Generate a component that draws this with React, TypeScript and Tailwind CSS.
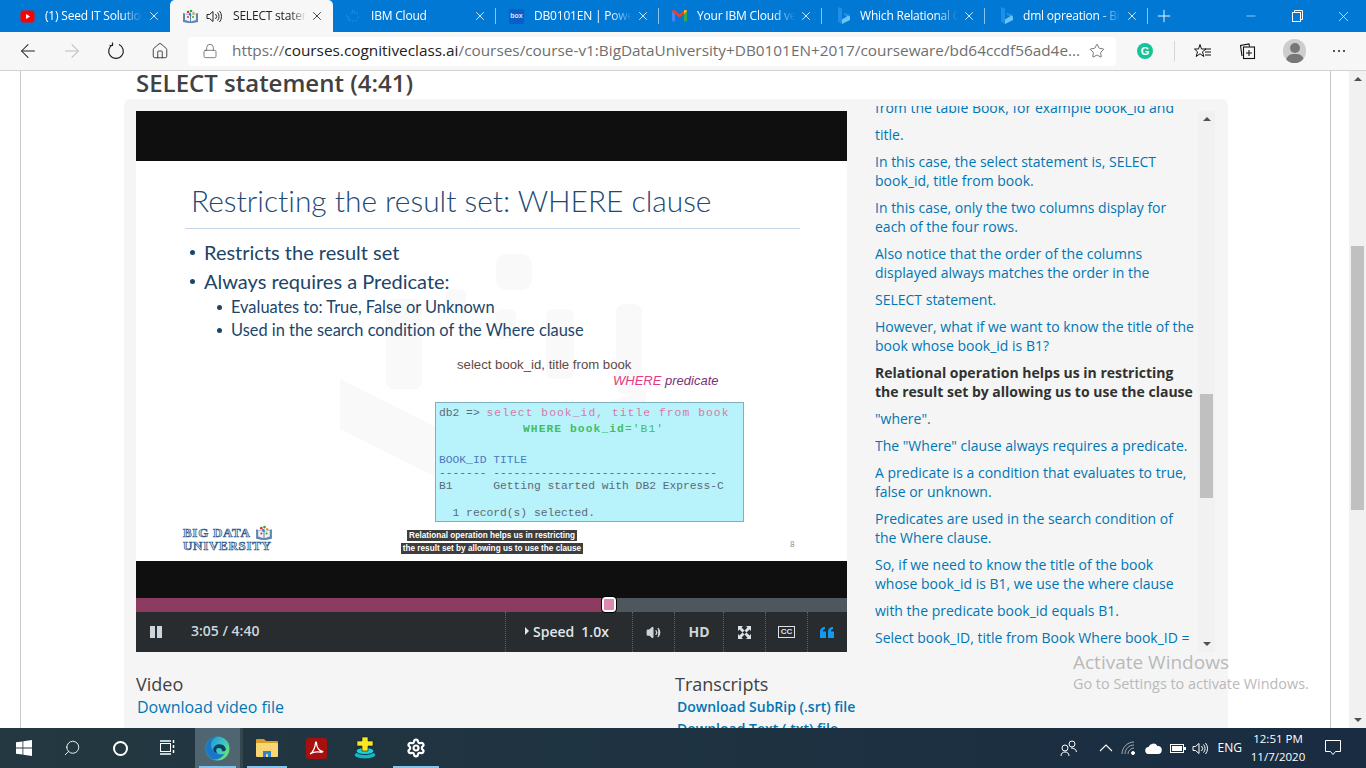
import { ArrowLeft, ArrowRight, House, Lock, Minus, Plus, Search, Settings, Star, Volume2, X } from 'lucide-react';
import type { ReactNode } from 'react';

const sans = 'font-["Open_Sans",sans-serif]';

function YoutubeIcon() {
  return (
    <svg width="15" height="15" viewBox="0 0 15 15">
      <rect x="0.5" y="1.5" width="14" height="12" rx="3" fill="#f00" />
      <path d="M6 5l4 2.5L6 10z" fill="#fff" />
    </svg>
  );
}

function BduIcon({ size = 17 }: { size?: number }) {
  return (
    <svg width={size} height={size * 0.88} viewBox="0 0 17 15">
      <path d="M1 4l7 2 1 0 7-2v9l-7 1.500h-1L1 13z" fill="#5f86ad" />
      <path d="M3 5l5 1.500v6L3 11z M14 5l-5 1.500v6l5-1.500z" fill="#f1f1f1" />
      <circle cx="6" cy="3" r="1.300" fill="#d33" />
      <circle cx="9" cy="2" r="1.300" fill="#3a3" />
      <circle cx="11.500" cy="4" r="1.200" fill="#e9a21b" />
      <circle cx="8" cy="5" r="1.200" fill="#37c" />
      <circle cx="6" cy="8" r="1" fill="#d33" />
      <circle cx="11" cy="8" r="1" fill="#3a3" />
    </svg>
  );
}

function IbmIcon() {
  return (
    <svg width="20" height="18" viewBox="0 0 20 18" fill="none" stroke="#2f9be8" strokeWidth="1" strokeDasharray="1.500 1">
      <path d="M4 9a6 6 0 1 0 12 0" />
      <path d="M2 7a8 8 0 0 0 4 8" />
      <path d="M8 3c3-1 6 1 7 4" />
      <path d="M6 6c2-1.500 5-1.500 7 1" />
    </svg>
  );
}

function BoxIcon() {
  return (
    <div className="flex h-[15px] w-[15px] items-center justify-center rounded-[2px] bg-[#0b5fc4] font-['Liberation_Sans',sans-serif] text-[7px] font-bold text-[#cfe4ff]">
      box
    </div>
  );
}

function GmailIcon() {
  return (
    <svg width="15" height="12" viewBox="0 0 15 12">
      <path d="M0 1.500h3v10H1a1 1 0 0 1-1-1z" fill="#4285f4" />
      <path d="M12 1.500h3v9a1 1 0 0 1-1 1h-2z" fill="#34a853" />
      <path d="M0 1.500c0-1.500 2-1.800 3-1l4.500 4 4.500-4c1-.8 3-.5 3 1l-7.500 6z" fill="#ea4335" />
      <path d="M12 .5c1-.8 3-.5 3 1L12 4z" fill="#fbbc04" />
    </svg>
  );
}

function BingIcon() {
  return (
    <svg width="14" height="18" viewBox="0 0 14 18">
      <path d="M2 0l4 1.500v11l5-3-2.500-1-1.200-3 6.700 2.200v4L6 17l-4-2.500z" fill="#1f8fe6" />
      <path d="M6 12.500l5-3v-1l3 1v3.500L6 17z" fill="#6cc4f5" />
    </svg>
  );
}

function SpeakerIcon({ color = '#222' }: { color?: string }) {
  return (
    <svg width="17" height="15" viewBox="0 0 17 15" fill="none" stroke={color} strokeWidth="1">
      <path d="M1 5.500h2.500L7 2.500v10l-3.500-3H1z" />
      <path d="M9.500 5a3.500 3.500 0 0 1 0 5" />
      <path d="M11.500 3.500a6 6 0 0 1 0 8" />
      <path d="M13.500 2a8.500 8.500 0 0 1 0 11" />
    </svg>
  );
}

function Tab({ icon, title, active, speaker, sep }: { icon: ReactNode; title: string; active?: boolean; speaker?: boolean; sep?: boolean }) {
  return (
    <div className={`relative flex h-full w-[163px] shrink-0 items-center pl-[12px] pr-[9px] ${active ? 'rounded-t-[5px] bg-[#f7f7f7] text-[#222]' : 'text-white'}`}>
      <div className="flex w-[17px] shrink-0 justify-center">{icon}</div>
      {speaker && (
        <div className="ml-[7px] shrink-0">
          <SpeakerIcon />
        </div>
      )}
      <div className={`${speaker ? 'ml-[10px]' : 'ml-[9px]'} min-w-0 flex-1 overflow-hidden whitespace-nowrap text-[12px] tracking-[-0.2px] [mask-image:linear-gradient(to_right,black_78%,transparent)] ${sans}`}>{title}</div>
      <X size={14} strokeWidth={1.4} className="ml-1 shrink-0" />
      {sep && <div className="absolute right-0 top-[8px] h-[16px] w-px bg-[#8fc3ea]" />}
    </div>
  );
}

function TabBar() {
  return (
    <div className="flex h-[32px] shrink-0 items-stretch bg-[#0078d4] pl-[7px]">
      <Tab icon={<YoutubeIcon />} title="(1) Seed IT Solutions" />
      <Tab icon={<BduIcon />} title="SELECT statement (4:41)" active speaker />
      <Tab icon={<IbmIcon />} title="IBM Cloud" sep />
      <Tab icon={<BoxIcon />} title="DB0101EN | PowerPoint" sep />
      <Tab icon={<GmailIcon />} title="Your IBM Cloud verification" sep />
      <Tab icon={<BingIcon />} title="Which Relational Operation" sep />
      <Tab icon={<BingIcon />} title="dml opreation - Bing search" sep />
      <div className="ml-[6px] flex items-center text-white">
        <Plus size={20} strokeWidth={1.1} />
      </div>
      <div className="ml-auto flex items-center text-white">
        <div className="flex w-[46px] justify-center">
          <Minus size={14} strokeWidth={1} />
        </div>
        <div className="flex w-[46px] justify-center">
          <svg width="11" height="12" viewBox="0 0 11 12" fill="none" stroke="#fff" strokeWidth="1">
            <rect x="0.500" y="2.500" width="8" height="9" />
            <path d="M2.500 2.500v-2h8v9h-2" />
          </svg>
        </div>
        <div className="flex w-[46px] justify-center">
          <X size={17} strokeWidth={1} />
        </div>
      </div>
    </div>
  );
}

function Toolbar() {
  return (
    <div className="flex h-[39px] shrink-0 items-center border-b border-[#d2d2d2] bg-[#f7f7f7]">
      <div className="flex w-[188px] shrink-0 items-center pl-[17px] text-[#222]">
        <ArrowLeft size={22} strokeWidth={1.1} />
        <ArrowRight size={22} strokeWidth={1.1} className="ml-[22px] text-[#bcbcbc]" />
        <svg width="18" height="18" viewBox="0 0 18 18" fill="none" stroke="#222" strokeWidth="1.200" className="ml-[24px]">
          <path d="M6 2.500a7.300 7.300 0 1 0 6 0" />
          <path d="M5.500 0.500v3h-3" />
        </svg>
        <House size={18} strokeWidth={1.1} className="ml-[26px]" />
      </div>
      <div className="flex h-[29px] w-[928px] shrink-0 items-center rounded-[4px] bg-white pl-[14px]">
        <Lock size={16} strokeWidth={1.1} className="text-[#555]" />
        <div className={`ml-[14px] whitespace-nowrap text-[15.350px] leading-none text-[#6f6f6f] ${sans}`}>
          https://<span className="text-[#222]">courses.cognitiveclass.ai</span>/courses/course-v1:BigDataUniversity+DB0101EN+2017/courseware/bd64ccdf56ad4e...
        </div>
        <Star size={16} strokeWidth={1.1} className="ml-auto mr-[11px] text-[#444]" />
      </div>
      <div className="flex flex-1 items-center">
        <div className="ml-[21px] flex h-[16px] w-[16px] items-center justify-center rounded-full bg-[#15c39a] font-['Liberation_Sans',sans-serif] text-[11px] font-bold leading-none text-white">G</div>
        <div className="ml-[21px] h-[20px] w-px bg-[#d5d5d5]" />
        <svg width="18" height="17" viewBox="0 0 18 17" fill="none" stroke="#111" strokeWidth="1" className="ml-[19px]">
          <path d="M6 1.500l1.500 4.500H12L8.500 8.800l1.300 4.700L6 10.800l-3.800 2.700 1.300-4.700L0.500 6H4.500z" />
          <path d="M11 6h6M11 9h6M11 12h6" />
        </svg>
        <svg width="18" height="18" viewBox="0 0 18 18" fill="none" stroke="#111" strokeWidth="1.100" className="ml-[27px]">
          <path d="M3 14L1.500 3.500 10 2l.5 2.500" />
          <rect x="4.500" y="5" width="11" height="11.500" />
          <path d="M10 8v6M7 11h6" />
        </svg>
        <div className="relative ml-[26px] flex h-[24px] w-[23px] items-start justify-center overflow-hidden rounded-full bg-[#cfcdcb]">
          <div className="mt-[4px] h-[10px] w-[10px] rounded-full bg-[#777]" />
          <div className="absolute top-[15px] h-[14px] w-[18px] rounded-full bg-[#777]" />
        </div>
        <div className="ml-[27px] flex gap-[3px]">
          <div className="h-[2px] w-[2px] rounded-full bg-[#222]" />
          <div className="h-[2px] w-[2px] rounded-full bg-[#222]" />
          <div className="h-[2px] w-[2px] rounded-full bg-[#222]" />
        </div>
      </div>
    </div>
  );
}

function Arrow({ up }: { up?: boolean }) {
  return <div className={`h-0 w-0 border-x-[4px] border-x-transparent ${up ? 'border-b-[4px] border-b-[#505050]' : 'border-t-[4px] border-t-[#505050]'}`} />;
}

function Watermark() {
  // faint logo behind the slide text
  return (
    <svg className="absolute left-[190px] top-[88px]" width="360" height="270" viewBox="0 0 360 270" fill="#f9f9f9">
      <rect x="170" y="5" width="36" height="36" rx="10" />
      <rect x="120" y="40" width="20" height="22" rx="6" />
      <rect x="170" y="60" width="20" height="30" rx="6" />
      <rect x="60" y="50" width="36" height="90" rx="8" />
      <rect x="220" y="60" width="28" height="70" rx="8" />
      <rect x="290" y="55" width="26" height="90" rx="8" />
      <path d="M14 130l100 50v50L14 180z" />
      <path d="M150 200l170-60v50l-170 70z" />
    </svg>
  );
}

function Bullet() {
  return <span className="mr-[9px] h-[5px] w-[5px] rounded-full bg-[#1c4569]" />;
}

function Slide() {
  return (
    <div className="relative flex h-[400px] flex-col overflow-hidden bg-white font-['Lato',sans-serif] text-[#1c4569] [font-variant-ligatures:none]">
      <Watermark />
      <div className="relative flex h-[400px] flex-col pl-[49px] pt-[21px]">
        <div className="whitespace-nowrap pl-[6px] text-[29.900px] font-light leading-[36px] text-[#1d4a73]">Restricting the result set: WHERE clause</div>
        <div className="mt-[10px] h-px w-[615px] bg-[#c6d5e6]" />
        <ul className="pl-[5px]">
          <li className="mt-[11px] flex items-center text-[20px] leading-[24px]">
            <Bullet />
            Restricts the result set
          </li>
          <li className="mt-[5px] flex items-center text-[20px] leading-[24px]">
            <Bullet />
            Always requires a Predicate:
          </li>
          <li className="mt-[4px] flex items-center pl-[27px] text-[16.400px] leading-[20px]">
            <Bullet />
            Evaluates to: True, False or Unknown
          </li>
          <li className="mt-[3px] flex items-center pl-[27px] text-[16.400px] leading-[20px]">
            <Bullet />
            Used in the search condition of the Where clause
          </li>
        </ul>
        <div className="ml-[272px] mt-[17px] font-['Liberation_Sans',sans-serif] text-[13.200px] leading-[16px] text-[#5f4a42]">select book_id, title from book</div>
        <div className="ml-[428px] font-['Liberation_Sans',sans-serif] text-[13px] italic leading-[15px] text-[#7e3078]">
          <span className="text-[#e23b82]">WHERE</span> predicate
        </div>
        <div className="ml-[250px] mt-[14px] h-[120px] w-[309px] border border-[#7eb0c2] bg-[#b8f3fb] pl-[3px] pt-[2px] font-['Liberation_Mono',monospace] text-[11.300px] leading-[16px] text-[#5b6a78] whitespace-pre">
          <div>db2 =&gt; <span className="tracking-[1.060px] text-[#d779a8]">select book_id, title from book</span></div>
          <div className="ml-[84px] tracking-[1.060px] text-[#46bb66]"><span className="font-bold">WHERE book_id</span>='B1'</div>
          <div className="mt-[17px] leading-[13px] text-[#4a78bd]">BOOK_ID TITLE</div>
          <div className="leading-[13px]">------- ---------------------------------</div>
          <div className="leading-[13px]">B1      Getting started with DB2 Express-C</div>
          <div className="mt-[13px] leading-[14px]">  1 record(s) selected.</div>
        </div>
        <div className="relative mt-[3px] flex items-start">
          <div className="ml-[-2px] mt-[1px] w-[110px] font-['Liberation_Serif',serif] text-[13px] font-bold leading-[13px] tracking-[0.7px] text-[#d3e0ee] [-webkit-text-stroke:0.7px_#2f5c8c]">
            <div className="flex h-[13px] items-center gap-[4px]">
              BIG DATA
              <BduIcon size={18} />
            </div>
            <div>UNIVERSITY</div>
          </div>
          <div className="ml-[103px] flex w-[192px] flex-col items-center font-['Liberation_Sans',sans-serif] text-[8.200px] font-bold leading-[11px] text-white">
            <span className="mt-[5px] bg-[#3d3d3d] px-[2px]">Relational operation helps us in restricting</span>
            <span className="mt-[2px] bg-[#3d3d3d] px-[2px]">the result set by allowing us to use the clause</span>
          </div>
          <div className="ml-[202px] mt-[13px] text-[8px] text-[#8a8a8a]">8</div>
        </div>
      </div>
    </div>
  );
}

function Divider({ className, children }: { className: string; children?: ReactNode }) {
  return <div className={`flex h-full items-center justify-center border-l border-dotted border-[#5d6368] ${className}`}>{children}</div>;
}

function Controls() {
  return (
    <div className={`flex h-[40px] items-center bg-[#282c2f] text-[#cdd6dc] ${sans}`}>
      <div className="ml-[14px] flex gap-[2px]">
        <div className="h-[12px] w-[5px] bg-[#cdd6dc]" />
        <div className="h-[12px] w-[5px] bg-[#cdd6dc]" />
      </div>
      <div className="mb-[3px] ml-[29px] text-[14px] font-semibold">3:05 / 4:40</div>
      <div className="ml-auto flex h-full">
        <Divider className="w-[127px] gap-[7px] pb-[2px] pr-[4px] text-[14px] font-semibold text-[#dfe7ec]">
          <div className="flex items-center gap-[4px]">
            <div className="h-0 w-0 border-y-[4px] border-l-[4px] border-y-transparent border-l-[#dfe7ec]" />
            <span>Speed</span>
          </div>
          <span>1.0x</span>
        </Divider>
        <Divider className="w-[42px]">
          <Volume2 size={15} className="fill-[#cdd6dc]" />
        </Divider>
        <Divider className="w-[49px] pb-[2px] text-[14px] font-bold">HD</Divider>
        <Divider className="w-[42px]">
          <svg width="13" height="13" viewBox="0 0 13 13" fill="#dbe3e8">
            <path d="M0 0h5L3.500 1.500 6.500 4.500 4.500 6.500 1.500 3.500 0 5zM13 0v5l-1.500-1.500-3 3-2-2 3-3L8 0zM0 13V8l1.500 1.500 3-3 2 2-3 3L5 13zM13 13H8l1.500-1.500-3-3 2-2 3 3L13 8z" />
          </svg>
        </Divider>
        <Divider className="w-[42px]">
          <div className="flex h-[12px] w-[17px] items-center justify-center border-[1.500px] border-[#dbe3e8] font-['Liberation_Sans',sans-serif] text-[8px] font-bold leading-none text-[#dbe3e8]">CC</div>
        </Divider>
        <Divider className="w-[40px] pr-[1px]">
          <svg width="14" height="11" viewBox="0 0 14 11" fill="#0f9bf0">
            <path d="M0 5c0-3 2-5 5-5v2C3.500 2 3 3 3 4.500h3V11H0zM8 5c0-3 2-5 5-5v2c-1.500 0-2 1-2 2.500h3V11H8z" />
          </svg>
        </Divider>
      </div>
    </div>
  );
}

function Video() {
  return (
    <div className="w-[711px] shrink-0">
      <div className="h-[50px] bg-[#0f0f0f]" />
      <Slide />
      <div className="h-[37px] bg-[#0f0f0f]" />
      <div className="relative flex h-[14px] bg-[#4f575e]">
        <div className="h-full w-[473px] bg-[#8c3c60]" />
        <div className="absolute left-[466px] top-[-1px] h-[15px] w-[14px] rounded-[3px] border-2 border-white bg-[#dd88ae] outline outline-1 outline-black" />
      </div>
      <Controls />
    </div>
  );
}

const paragraphs: [string[], boolean?][] = [
  [['from the table Book, for example book_id and']],
  [['title.']],
  [['In this case, the select statement is, SELECT', 'book_id, title from book.']],
  [['In this case, only the two columns display for', 'each of the four rows.']],
  [['Also notice that the order of the columns', 'displayed always matches the order in the']],
  [['SELECT statement.']],
  [['However, what if we want to know the title of the', 'book whose book_id is B1?']],
  [['Relational operation helps us in restricting', 'the result set by allowing us to use the clause'], true],
  [['"where".']],
  [['The "Where" clause always requires a predicate.']],
  [['A predicate is a condition that evaluates to true,', 'false or unknown.']],
  [['Predicates are used in the search condition of', 'the Where clause.']],
  [['So, if we need to know the title of the book', 'whose book_id is B1, we use the where clause']],
  [['with the predicate book_id equals B1.']],
  [['Select book_ID, title from Book Where book_ID =']],
];

function Transcript() {
  return (
    <div className="ml-[28px] flex h-[541px] w-[340px] shrink-0">
      <div className="-mt-[5px] h-[546px] w-[323px] overflow-hidden">
        <div className={`-mt-[8px] flex flex-col gap-[8px] text-[14px] leading-[19px] ${sans}`}>
          {paragraphs.map(([lines, bold], i) => (
            <div key={i} className={bold ? 'font-bold text-[#313131]' : 'text-[#0075b4]'}>
              {lines.map((l) => (
                <div key={l} className="whitespace-nowrap">{l}</div>
              ))}
            </div>
          ))}
        </div>
      </div>
      <Scrollbar className="w-[17px]" thumbTop={283} thumbHeight={104} />
    </div>
  );
}

function Scrollbar({ className, thumbTop, thumbHeight }: { className: string; thumbTop: number; thumbHeight: number }) {
  return (
    <div className={`relative flex shrink-0 flex-col items-center justify-between bg-[#f1f1f1] py-[6px] ${className}`}>
      <Arrow up />
      <div className="absolute left-[2px] right-[2px] bg-[#c0c0c0]" style={{ top: thumbTop, height: thumbHeight }} />
      <Arrow />
    </div>
  );
}

function Page() {
  return (
    <div className="relative flex min-h-0 flex-1 overflow-hidden bg-white">
      <div className="ml-[20px] h-full w-[1311px] shrink-0 border-x border-[#c8c8c8] pl-[103px]">
        <div className={`pb-[4px] pl-[12px] text-[24px] font-semibold leading-[24px] text-[#414141] ${sans}`}>SELECT statement (4:41)</div>
        <div className={`h-[700px] w-[1104px] rounded-t-[6px] bg-[#f5f5f5] pl-[12px] pt-[12px] ${sans}`}>
          <div className="flex">
            <Video />
            <Transcript />
          </div>
          <div className="mt-[21px] flex">
            <div className="w-[539px]">
              <div className="text-[18px] leading-[22px] text-[#414141]">Video</div>
              <div className="ml-[1px] mt-[1px] text-[16px] leading-[22px] text-[#0075b4]">Download video file</div>
            </div>
            <div>
              <div className="text-[18px] leading-[22px] text-[#414141]">Transcripts</div>
              <div className="ml-[2px] mt-[1px] text-[14px] font-semibold leading-[22px] text-[#0075b4]">Download SubRip (.srt) file</div>
              <div className="ml-[2px] text-[14px] font-semibold leading-[22px] text-[#0075b4]">Download Text (.txt) file</div>
            </div>
          </div>
        </div>
      </div>
      <Scrollbar className="ml-auto w-[17px]" thumbTop={175} thumbHeight={264} />
      {/* windows activation watermark sits on top of the page */}
      <div className={`absolute left-[1073px] top-[579px] text-[#b9b9b9] ${sans}`}>
        <div className="text-[19px] leading-[24px]">Activate Windows</div>
        <div className="text-[14.400px] leading-[20px]">Go to Settings to activate Windows.</div>
      </div>
    </div>
  );
}

function TaskSlot({ children, className = 'w-[48px]', underline }: { children: ReactNode; className?: string; underline?: boolean }) {
  return (
    <div className={`relative flex h-full shrink-0 items-center justify-center ${className}`}>
      {children}
      {underline && <div className="absolute bottom-0 left-[4px] right-[4px] h-[2px] bg-[#86c2ee]" />}
    </div>
  );
}

function Taskbar() {
  return (
    <div className={`flex h-[40px] shrink-0 items-center bg-gradient-to-r from-[#233840] to-[#192c42] text-white ${sans}`}>
      <TaskSlot>
        <svg width="16" height="16" viewBox="0 0 16 16" fill="#fff">
          <path d="M0 2.300l6.500-.9v6.200H0zM7.300 1.300L16 0v7.600H7.300zM0 8.400h6.500v6.200L0 13.700zM7.300 8.400H16V16l-8.700-1.200z" />
        </svg>
      </TaskSlot>
      <TaskSlot>
        <Search size={18} strokeWidth={1.2} className="-scale-x-100" />
      </TaskSlot>
      <TaskSlot>
        <div className="h-[15px] w-[15px] rounded-full border-2 border-white" />
      </TaskSlot>
      <TaskSlot>
        <svg width="16" height="16" viewBox="0 0 16 16" fill="none" stroke="#fff" strokeWidth="1">
          <rect x="0.500" y="3.500" width="10" height="8" />
          <path d="M0 1h11M0 14h11M13.500 0v3M13.500 5v3M13.500 10v3" strokeWidth="1.500" />
        </svg>
      </TaskSlot>
      <TaskSlot className="ml-[3px] w-[45px] bg-[#4f6670]" underline>
        <svg width="25" height="25" viewBox="0 0 24 24">
          <defs>
            <linearGradient id="edgeA" x1="0" y1="0" x2="1" y2="0.700">
              <stop offset="0" stopColor="#1f86d6" />
              <stop offset="0.600" stopColor="#36c4c8" />
              <stop offset="1" stopColor="#66e56e" />
            </linearGradient>
          </defs>
          <circle cx="12" cy="12" r="11.500" fill="url(#edgeA)" />
          <path d="M1 12C1 5 7 .5 12 .5 7 2 5 6 6 10c1 5 7 9 13 7-3 4-7 6-11 5.500C4 21 1 17 1 12z" fill="#1877c9" />
          <path d="M8 13c0-3 3-5 6-5 4 0 6 3 6 5 0 1.500-2 2-4 1.500 1-2-1-3-3-3-2.500 0-3 3-1 5-2-.5-4-1.500-4-3.500z" fill="#133d62" />
        </svg>
      </TaskSlot>
      <div className="h-full w-[3px] bg-[#34474f]" />
      <TaskSlot underline>
        <svg width="22" height="20" viewBox="0 0 22 20">
          <path d="M0 2a1 1 0 0 1 1-1h7l2 2h11a1 1 0 0 1 1 1v2H0z" fill="#d99e26" />
          <rect y="5" width="22" height="14" rx="1" fill="#f8d675" />
          <path d="M7 19v-6h8v6h-3v-3h-2v3z" fill="#2d86d4" />
        </svg>
      </TaskSlot>
      <TaskSlot className="w-[50px]">
        <div className="flex h-[21px] w-[21px] items-center justify-center rounded-[3px] bg-[#a80f0f]">
          <svg width="15" height="15" viewBox="0 0 15 15" fill="none" stroke="#fff" strokeWidth="1.300">
            <path d="M1 13c3-2 5-6 5.500-11 0-1 1-1 1 0 0 5 3 8 6 8.500 1 0-.5 1-2 .7C8 10.500 4 11 1 13z" />
          </svg>
        </div>
      </TaskSlot>
      <TaskSlot className="w-[48px]">
        <svg width="24" height="24" viewBox="0 0 24 24">
          <ellipse cx="12" cy="19" rx="11" ry="4" fill="#19b3c2" stroke="#083a46" />
          <ellipse cx="12" cy="15" rx="9" ry="3.500" fill="#23d0d8" stroke="#083a46" />
          <path d="M9 1h6v4h5v5h-5v5H9v-5H4V5h5z" fill="#f9e721" stroke="#1a1a1a" strokeWidth="0.600" />
        </svg>
      </TaskSlot>
      <TaskSlot className="w-[54px]" underline>
        <Settings size={20} strokeWidth={2.6} />
      </TaskSlot>
      <div className="ml-auto flex h-full items-center text-[12px]">
        <svg width="18" height="16" viewBox="0 0 18 16" fill="none" stroke="#fff" strokeWidth="1">
          <circle cx="5" cy="8" r="3" />
          <path d="M1 16c0-3 2-4 4-4s4 1 4 4" />
          <circle cx="12" cy="4" r="3" />
          <path d="M11 8c3 0 5 1 5.500 4" />
        </svg>
        <svg width="14" height="8" viewBox="0 0 14 8" fill="none" stroke="#fff" strokeWidth="1.100" className="ml-[21px]">
          <path d="M1 7l6-6 6 6" />
        </svg>
        <svg width="16" height="14" viewBox="0 0 16 14" fill="none" stroke="#fff" strokeWidth="1" className="ml-[8px]">
          <path d="M1 13c0-6 5-12 12-12M4 13c0-5 4-9 9-9M7 13c0-3 3-6 6-6" strokeOpacity="0.600" />
          <circle cx="12" cy="12" r="1.500" fill="#fff" />
        </svg>
        <svg width="17" height="11" viewBox="0 0 17 11" fill="#fff" className="ml-[8px]">
          <path d="M4 11a3.500 3.500 0 0 1-.5-7 5 5 0 0 1 9-1 4 4 0 0 1 .5 8z" />
        </svg>
        <svg width="16" height="9" viewBox="0 0 16 9" className="ml-[8px]">
          <rect x="0.500" y="0.500" width="13" height="8" fill="none" stroke="#fff" />
          <rect x="2" y="2" width="10" height="5" fill="#fff" />
          <rect x="14" y="3" width="2" height="3" fill="#fff" />
        </svg>
        <div className="ml-[6px]">
          <SpeakerIcon color="#fff" />
        </div>
        <div className="ml-[9px] text-[12px]">ENG</div>
        <div className="ml-[6px] w-[60px] text-center text-[11.500px] leading-[18px]">
          <div>12:51 PM</div>
          <div>11/7/2020</div>
        </div>
        <svg width="17" height="16" viewBox="0 0 17 16" fill="none" stroke="#fff" strokeWidth="1" className="ml-[17px] mr-[24px]">
          <path d="M.5.500h15v11h-5l-2.500 3-2.500-3h-5z" />
        </svg>
      </div>
    </div>
  );
}

export default function App() {
  return (
    <div className="flex h-[768px] w-[1366px] flex-col overflow-hidden">
      <TabBar />
      <Toolbar />
      <Page />
      <Taskbar />
    </div>
  );
}
